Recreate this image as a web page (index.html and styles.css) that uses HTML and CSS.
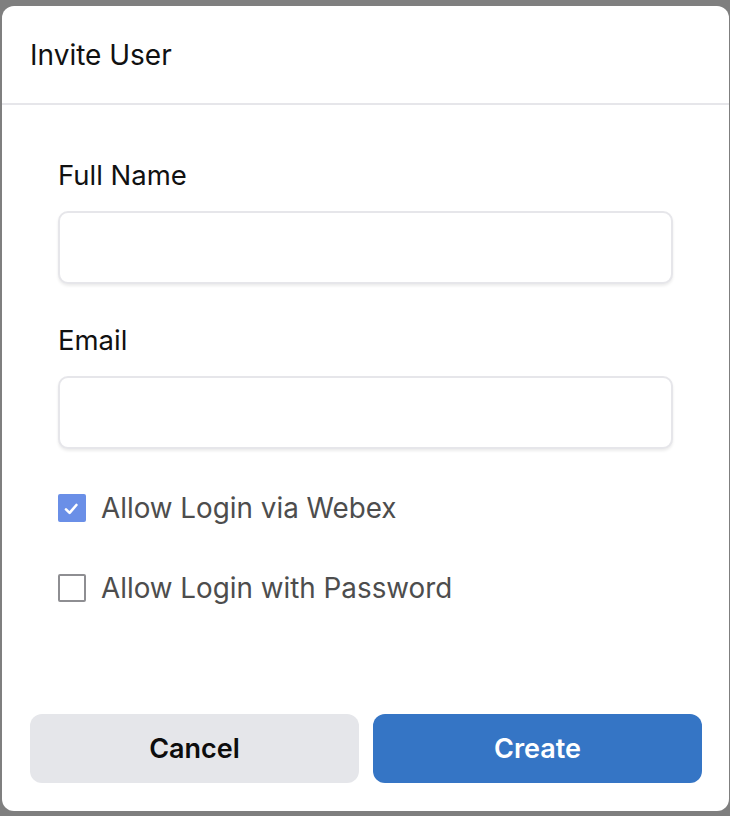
FILE: index.html
```html
<!DOCTYPE html>
<html lang="en">
<head>
<meta charset="utf-8">
<title>Invite User</title>
<link rel="stylesheet" href="styles.css">
</head>
<body>
<div class="modal">
  <div class="modal-header">
    <h1 class="modal-title">Invite User</h1>
  </div>
  <div class="modal-body">
    <div class="field">
      <label class="field-label" for="fullname">Full Name</label>
      <input class="field-input" id="fullname" type="text">
    </div>
    <div class="field">
      <label class="field-label" for="email">Email</label>
      <input class="field-input" id="email" type="text">
    </div>
    <div class="checks">
      <div class="check-row">
        <span class="checkbox checked">
          <svg viewBox="0 0 28 28" width="28" height="28"><path d="M8 15.4 L11.6 18.9 L18.4 11" fill="none" stroke="#fff" stroke-width="2.6" stroke-linecap="round" stroke-linejoin="round"/></svg>
        </span>
        <span class="check-label">Allow Login via Webex</span>
      </div>
      <div class="check-row">
        <span class="checkbox"></span>
        <span class="check-label">Allow Login with Password</span>
      </div>
    </div>
  </div>
  <div class="modal-footer">
    <button class="btn btn-cancel">Cancel</button>
    <button class="btn btn-create">Create</button>
  </div>
</div>
</body>
</html>
```
FILE: styles.css
```css
* { box-sizing: border-box; }
html, body {
  margin: 0;
  padding: 0;
  background: #7f7f7f;
  font-family: Inter, "Noto Sans", sans-serif;
}
body {
  padding: 6px 1px 5px 2px;
  height: 816px;
  overflow: hidden;
}
.modal {
  width: 727px;
  height: 805px;
  background: #ffffff;
  border-radius: 12px;
  display: flex;
  flex-direction: column;
}
.modal-header {
  height: 99px;
  border-bottom: 2px solid #e6e6ea;
  padding: 0 28px;
  display: flex;
  align-items: center;
}
.modal-title {
  margin: 0;
  font-size: 28px;
  font-weight: 400;
  color: #111;
}
.modal-body {
  flex: 1;
  padding: 53px 56px 0 56px;
}
.field {
  display: flex;
  flex-direction: column;
  margin-bottom: 39px;
}
.field-label {
  font-size: 27.5px;
  line-height: 34px;
  color: #111;
  margin-bottom: 19px;
}
.field-input {
  height: 73px;
  width: 100%;
  border: 2px solid #e6e6ea;
  border-radius: 10px;
  box-shadow: 0 2px 3px rgba(0, 0, 0, 0.08);
  background: #fff;
  outline: none;
  font: inherit;
  font-size: 24px;
  padding: 0 16px;
}
.checks {
  padding-top: 6px;
  display: flex;
  flex-direction: column;
  gap: 52px;
}
.check-row {
  display: flex;
  align-items: center;
  gap: 15px;
  height: 28px;
}
.checkbox {
  width: 28px;
  height: 28px;
  border: 2px solid #8e8e92;
  border-radius: 2px;
  background: #fff;
  flex: none;
  display: block;
}
.checkbox.checked {
  border: none;
  background: #6a8fe7;
}
.checkbox svg { display: block; }
.check-label {
  font-size: 27.8px;
  color: #4d4d4d;
  line-height: 34px;
}
.modal-footer {
  display: flex;
  gap: 14px;
  padding: 0 27px 28px 28px;
}
.btn {
  flex: 1;
  height: 69px;
  border: none;
  border-radius: 12px;
  font-family: Inter, "Noto Sans", sans-serif;
  font-size: 27px;
  font-weight: 600;
  cursor: pointer;
}
.btn-cancel {
  background: #e5e6ea;
  color: #0d0d0d;
}
.btn-create {
  background: #3575c5;
  color: #ffffff;
}
```
